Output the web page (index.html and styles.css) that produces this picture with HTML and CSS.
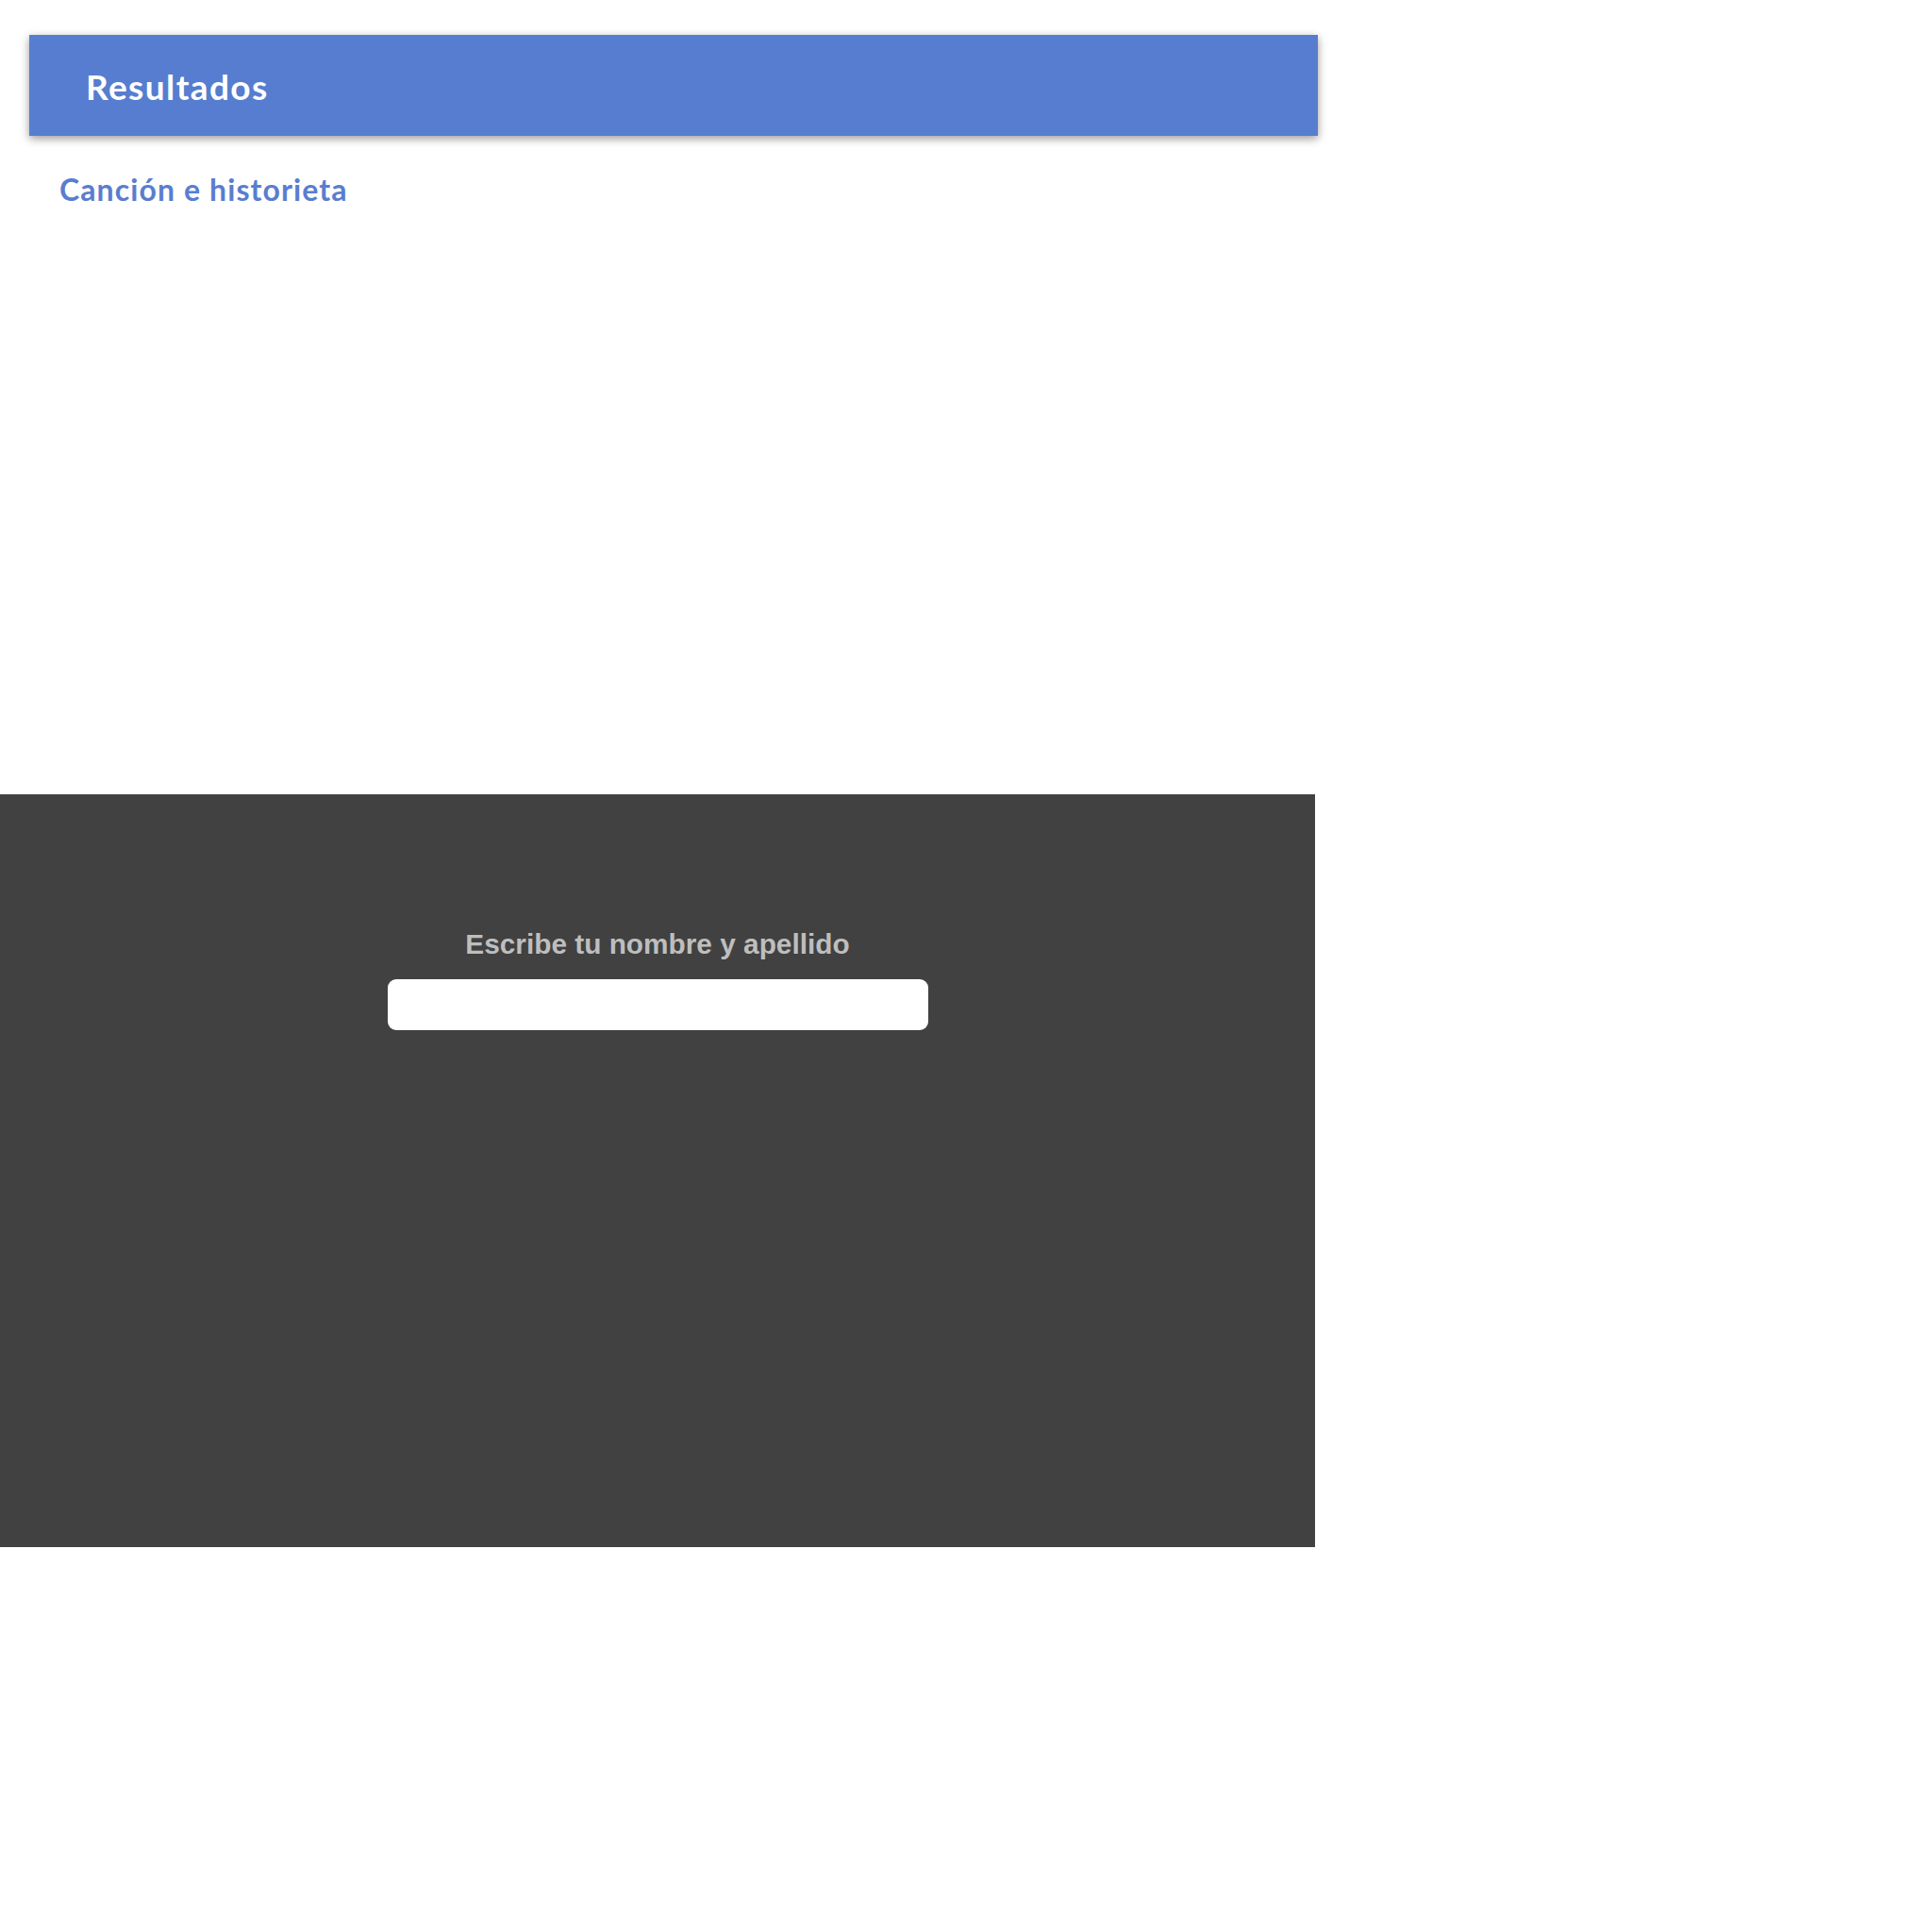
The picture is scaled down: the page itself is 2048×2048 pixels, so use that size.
FILE: index.html
```html
<!DOCTYPE html>
<html lang="es">
<head>
<meta charset="utf-8">
<title>Resultados</title>
<link rel="stylesheet" href="styles.css">
</head>
<body>
  <div class="top">
    <header class="banner">
      <h1 class="banner-title">Resultados</h1>
    </header>
    <h2 class="subtitle">Canción e historieta</h2>
  </div>
  <section class="name-panel">
    <div class="name-form">
      <label class="name-label" for="nombre">Escribe tu nombre y apellido</label>
      <input class="name-input" id="nombre" type="text">
    </div>
  </section>
</body>
</html>
```

FILE: styles.css
```css
html, body {
  margin: 0;
  padding: 0;
  background: #ffffff;
}

.top {
  height: 842px;
  padding-top: 37px;
  box-sizing: border-box;
}

.banner {
  margin-left: 31px;
  width: 1366px;
  height: 107px;
  background: #567dcf;
  box-shadow: 0 3px 9px rgba(0, 0, 0, 0.4);
  padding: 36px 0 0 60px;
  box-sizing: border-box;
}

.banner-title {
  margin: 0;
  font-family: "Lato", "Liberation Sans", sans-serif;
  font-weight: 700;
  font-size: 37px;
  line-height: 1;
  letter-spacing: 1.4px;
  color: #ffffff;
}

.subtitle {
  margin: 41px 0 0 63px;
  font-family: "Lato", "Liberation Sans", sans-serif;
  font-weight: 700;
  font-size: 32px;
  line-height: 1;
  letter-spacing: 1.1px;
  color: #5a7dcf;
}

.name-panel {
  width: 1394px;
  height: 798px;
  background: #414141;
  padding-top: 143px;
  box-sizing: border-box;
}

.name-form {
  display: flex;
  flex-direction: column;
  align-items: center;
  gap: 21px;
}

.name-label {
  font-family: "Liberation Sans", Arial, sans-serif;
  font-weight: 700;
  font-size: 29.8px;
  line-height: 32px;
  color: #bebebe;
}

.name-input {
  width: 573px;
  height: 54px;
  box-sizing: border-box;
  border: none;
  border-radius: 9px;
  background: #ffffff;
  margin: 0;
  padding: 0 12px;
  outline: none;
}
```
